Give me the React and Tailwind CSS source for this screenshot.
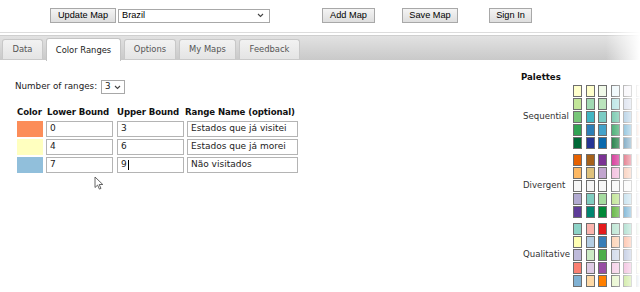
import React from "react";

const palettes = [
  {
    name: "Sequential",
    cols: [
      ["#ffffcc", "#c2e699", "#78c679", "#31a354", "#006837"],
      ["#ffffcc", "#a1dab4", "#41b6c4", "#2c7fb8", "#253494"],
      ["#f0f9e8", "#bae4bc", "#7bccc4", "#43a2ca", "#0868ac"],
      ["#edf8fb", "#b2e2e2", "#66c2a4", "#2ca25f", "#006d2c"],
      ["#f1eef6", "#bdc9e1", "#74a9cf", "#2b8cbe", "#045a8d"],
      ["#feedde", "#fdbe85", "#fd8d3c", "#e6550d", "#a63603"],
    ],
  },
  {
    name: "Divergent",
    cols: [
      ["#e66101", "#fdb863", "#f7f7f7", "#b2abd2", "#5e3c99"],
      ["#a6611a", "#dfc27d", "#f5f5f5", "#80cdc1", "#018571"],
      ["#7b3294", "#c2a5cf", "#f7f7f7", "#a6dba0", "#008837"],
      ["#d01c8b", "#f1b6da", "#f7f7f7", "#b8e186", "#4dac26"],
      ["#ca0020", "#f4a582", "#f7f7f7", "#92c5de", "#0571b0"],
      ["#e66101", "#fdb863", "#f7f7f7", "#b2abd2", "#5e3c99"],
    ],
  },
  {
    name: "Qualitative",
    cols: [
      ["#8dd3c7", "#ffffb3", "#bebada", "#fb8072", "#80b1d3"],
      ["#fbb4ae", "#b3cde3", "#ccebc5", "#decbe4", "#fed9a6"],
      ["#e41a1c", "#377eb8", "#4daf4a", "#984ea3", "#ff7f00"],
      ["#b3e2cd", "#fdcdac", "#cbd5e8", "#f4cae4", "#e6f5c9"],
      ["#66c2a5", "#fc8d62", "#8da0cb", "#e78ac3", "#a6d854"],
      ["#7fc97f", "#beaed4", "#fdc086", "#ffff99", "#386cb0"],
    ],
  },
];

const ranges = [
  { color: "#fc8d59", lo: "0", hi: "3", name: "Estados que já visitei" },
  { color: "#ffffbf", lo: "4", hi: "6", name: "Estados que já morei" },
  { color: "#91bfdb", lo: "7", hi: "9", name: "Não visitados", caret: true },
];

const tabs = [
  { label: "Data", w: "w-[41px]" },
  { label: "Color Ranges", w: "w-[75px]" },
  { label: "Options", w: "w-[52px]" },
  { label: "My Maps", w: "w-[57px]" },
  { label: "Feedback", w: "w-[61px]" },
];

function Btn({ children, className = "" }) {
  return (
    <button
      className={`h-[15px] px-0 whitespace-nowrap border border-[#a8a8a8] bg-linear-to-b from-[#f4f4f4] to-[#dedede] text-[9.2px] leading-none text-black font-['Liberation_Sans',Arial,sans-serif] ${className}`}
    >
      {children}
    </button>
  );
}

function Chevron() {
  return (
    <svg width="7" height="5" viewBox="0 0 7 5" className="shrink-0">
      <path d="M1 1l2.5 2.5L6 1" fill="none" stroke="#444" strokeWidth="1.1" />
    </svg>
  );
}

function Field({ children, className = "" }) {
  return (
    <div
      className={`h-[16px] border border-[#b4b4b4] bg-white pl-[3px] flex items-center text-[9px] text-[#222] whitespace-nowrap ${className}`}
    >
      {children}
    </div>
  );
}

export default function App() {
  return (
    <div className="relative w-[640px] h-[292px] overflow-hidden bg-white font-['DejaVu_Sans',Verdana,sans-serif]">
      {/* top buttons */}
      <div className="flex items-center h-[32px] pb-[1px]">
        <Btn className="ml-[50px] w-[66px]">Update Map</Btn>
        <div className="ml-[2px] w-[152px] h-[14px] border border-[#a8a8a8] bg-white flex items-center justify-between pl-[3px] pr-[5px] text-[9.2px] font-['Liberation_Sans',Arial,sans-serif]">
          <span>Brazil</span>
          <Chevron />
        </div>
        <Btn className="ml-[52px] w-[53px]">Add Map</Btn>
        <Btn className="ml-[27px] w-[56px]">Save Map</Btn>
        <Btn className="ml-[31px] w-[43px]">Sign In</Btn>
      </div>

      {/* tab bar */}
      <div className="border-t border-[#dcdcdc] pt-[2px]">
        <div className="border-t border-[#cfcfcf] h-[25px] bg-linear-to-b from-[#e2e2e2] to-[#c9c9c9] flex items-end pl-[2px] gap-[3px]">
          {tabs.map((t) => {
            const active = t.label === "Color Ranges";
            return (
              <div
                key={t.label}
                className={`${t.w} rounded-t-[3px] border border-b-0 flex items-center justify-center text-[8.4px] ${
                  active
                    ? "h-[23px] bg-white border-[#c4c4c4] text-[#222] -mb-[1px]"
                    : "h-[20px] mb-[1px] bg-linear-to-b from-[#f2f2f2] to-[#e4e4e4] border-[#c8c8c8] text-[#555]"
                }`}
              >
                {t.label}
              </div>
            );
          })}
        </div>
      </div>

      {/* content */}
      <div className="flex">
        <div className="pl-[15px] pt-[20px]">
          <div className="flex items-center text-[8.75px] text-[#222]">
            <span>Number of ranges:</span>
            <div className="ml-[4px] w-[24px] h-[14px] border border-[#a8a8a8] flex items-center justify-between pl-[3px] pr-[3px]">
              <span>3</span>
              <Chevron />
            </div>
          </div>

          <div className="mt-[12px] ml-[2px] flex flex-col gap-[2px]">
            <div className="flex text-[8.6px] font-bold text-[#111] h-[13px] items-center tracking-[-0.1px]">
              <span className="w-[30px]">Color</span>
              <span className="w-[70px]">Lower Bound</span>
              <span className="w-[68px]">Upper Bound</span>
              <span>Range Name (optional)</span>
            </div>
            {ranges.map((r) => (
              <div key={r.name} className="flex items-center gap-[3px]">
                <div className="w-[26px] h-[16px]" style={{ background: r.color }} />
                <Field className="w-[67px]">{r.lo}</Field>
                <Field className="w-[67px] ml-[1px]">
                  {r.hi}
                  {r.caret && <span className="inline-block w-px h-[10px] bg-black ml-[1px]" />}
                </Field>
                <Field className="w-[111px]">{r.name}</Field>
              </div>
            ))}
          </div>

          <svg width="11" height="14" viewBox="0 0 11 14" className="ml-[79px] mt-[3px]">
            <path
              d="M1 1v10.5l2.6-2.4 1.8 4 1.6-.7-1.8-3.9h3.6z"
              fill="white"
              stroke="#555"
              strokeWidth="0.9"
              strokeLinejoin="round"
            />
          </svg>
        </div>

        <div className="ml-auto w-[119px] shrink-0 pt-[13px]">
          <div className="text-[8.6px] font-bold text-[#111] leading-none">Palettes</div>
          <div className="mt-[3px] flex flex-col gap-[5px]">
            {palettes.map((p) => (
              <div key={p.name} className="flex items-center">
                <span className="w-[52px] shrink-0 pl-[2px] text-[8.6px] text-[#333] whitespace-nowrap">{p.name}</span>
                <div className="flex gap-[3.5px] shrink-0">
                  {p.cols.map((col, i) => (
                    <div key={i} className="flex flex-col w-[9px] gap-[1px]">
                      {col.map((c, j) => (
                        <div key={j} className="h-[12px] border border-[#6e6e6e]" style={{ background: c }} />
                      ))}
                    </div>
                  ))}
                </div>
              </div>
            ))}
          </div>
        </div>
      </div>

      {/* right edge fade */}
      <div className="absolute top-[30px] right-0 w-[34px] h-[262px] bg-linear-to-r from-white/0 to-white pointer-events-none" />
    </div>
  );
}
